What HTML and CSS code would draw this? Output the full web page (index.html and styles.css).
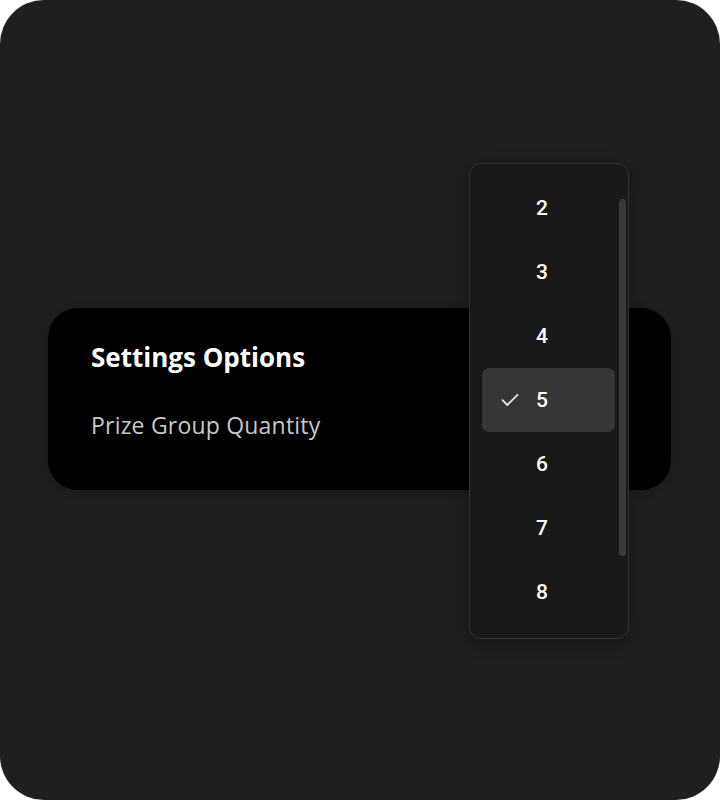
FILE: index.html
```html
<!DOCTYPE html>
<html lang="en">
<head>
<meta charset="utf-8">
<title>Settings Options</title>
<link rel="stylesheet" href="styles.css">
</head>
<body>
<div class="frame">
  <section class="card">
    <h1 class="card-title">Settings Options</h1>
    <p class="card-label">Prize Group Quantity</p>
  </section>
  <div class="menu" role="listbox">
    <ul class="menu-list">
      <li class="menu-item"><span class="check"></span><span class="num">2</span></li>
      <li class="menu-item"><span class="check"></span><span class="num">3</span></li>
      <li class="menu-item"><span class="check"></span><span class="num">4</span></li>
      <li class="menu-item selected"><span class="check"><svg viewBox="0 0 18 14" width="18" height="14"><path d="M1.5 7.2 L6.3 12 L16.5 1.8" fill="none" stroke="#e6e6e6" stroke-width="1.8" stroke-linecap="round" stroke-linejoin="round"/></svg></span><span class="num">5</span></li>
      <li class="menu-item"><span class="check"></span><span class="num">6</span></li>
      <li class="menu-item"><span class="check"></span><span class="num">7</span></li>
      <li class="menu-item"><span class="check"></span><span class="num">8</span></li>
    </ul>
    <div class="scrollbar"></div>
  </div>
</div>
</body>
</html>
```

FILE: styles.css
```css
html, body {
  margin: 0;
  padding: 0;
  background: #ffffff;
}

.frame {
  position: relative;
  width: 720px;
  height: 800px;
  box-sizing: border-box;
  background: #1f1f21;
  border-radius: 44px;
  padding: 308px 49px 0 48px;
  font-family: "Open Sans", "Lato", sans-serif;
}

.card {
  height: 182px;
  box-sizing: border-box;
  background: #000000;
  border-radius: 30px;
  padding: 32px 43px 0;
  box-shadow: 0 2px 10px rgba(0, 0, 0, 0.25);
}

.card-title {
  margin: 0;
  font-size: 26px;
  line-height: 34px;
  font-weight: 700;
  letter-spacing: 0;
  color: #ffffff;
}

.card-label {
  margin: 36px 0 0;
  font-size: 23px;
  line-height: 30px;
  font-weight: 400;
  letter-spacing: 0.2px;
  color: #c8c8c8;
}

.menu {
  position: absolute;
  left: 469px;
  top: 163px;
  width: 160px;
  height: 476px;
  box-sizing: border-box;
  background: #19191a;
  border: 1px solid #333335;
  border-radius: 12px;
  box-shadow: 0 4px 16px rgba(0, 0, 0, 0.35);
}

.menu-list {
  list-style: none;
  margin: 0;
  padding: 12px 13px 0 12px;
}

.menu-item {
  height: 64px;
  display: flex;
  align-items: center;
  padding-left: 19px;
  border-radius: 7px;
  font-family: "Roboto", "Liberation Sans", sans-serif;
  font-size: 21px;
  font-weight: 500;
  color: #ffffff;
}

.menu-item.selected {
  background: #363637;
}

.check {
  width: 18px;
  height: 14px;
  margin-right: 17px;
  display: flex;
}

.num {
  display: block;
}

.scrollbar {
  position: absolute;
  left: 149px;
  top: 35px;
  width: 7px;
  height: 357px;
  border-radius: 4px;
  background: #3a3a3b;
}
```
